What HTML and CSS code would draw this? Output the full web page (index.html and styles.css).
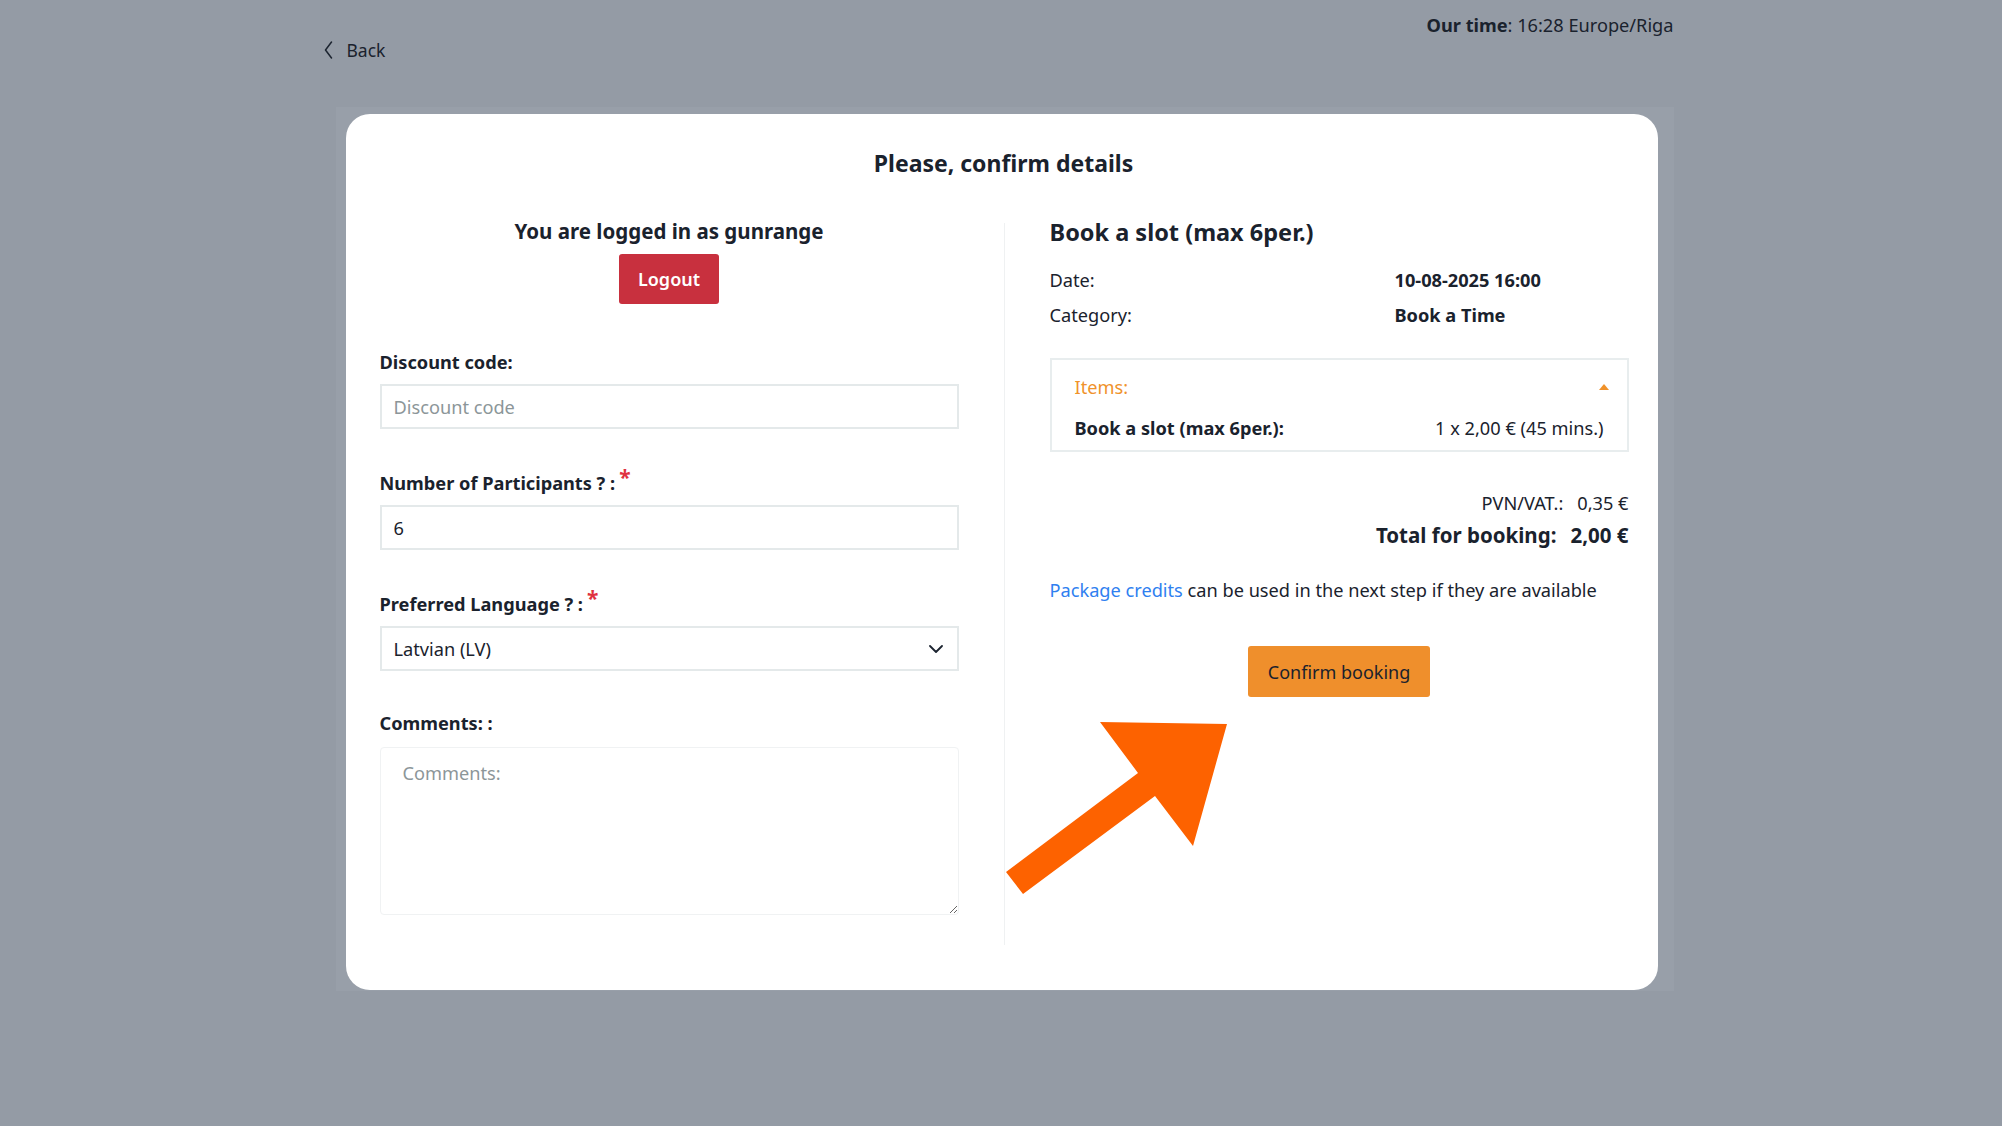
FILE: index.html
```html
<!DOCTYPE html>
<html lang="en">
<head>
  <meta charset="UTF-8">
  <title>Please, confirm details</title>
  <meta name="viewport" content="width=device-width, initial-scale=1.0">
  <link rel="stylesheet" href="styles.css">
</head>
<body>

  <div class="page">
    <div class="clock"><b>Our time</b>: 16:28 Europe/Riga</div>

    <a class="back" href="#">
      <svg width="9" height="18" viewBox="0 0 9 18"><path d="M7.5 1 L1.5 9 L7.5 17" fill="none" stroke="#1c2430" stroke-width="1.5" stroke-linecap="round" stroke-linejoin="round"/></svg>
      Back
    </a>

    <div class="panel">
      <div class="card">
        <h1 class="card-title">Please, confirm details</h1>

        <div class="columns">
          <!-- Left: user + form -->
          <div class="col-form">
            <div class="user-box">
              <div class="logged-in">You are logged in as gunrange</div>
              <button class="btn-logout">Logout</button>
            </div>

            <div class="field">
              <label>Discount code:</label>
              <input type="text" placeholder="Discount code">
            </div>

            <div class="field">
              <label>Number of Participants ? :<span class="req">*</span></label>
              <input type="text" value="6">
            </div>

            <div class="field">
              <label>Preferred Language ? :<span class="req">*</span></label>
              <div class="select-wrap">
                <select>
                  <option>Latvian (LV)</option>
                  <option>English (EN)</option>
                  <option>Russian (RU)</option>
                </select>
                <svg class="select-arrow" width="14" height="8" viewBox="0 0 14 8"><path d="M1 1 L7 7 L13 1" fill="none" stroke="#1c2430" stroke-width="1.8" stroke-linecap="round" stroke-linejoin="round"/></svg>
              </div>
            </div>

            <div class="field field-comments">
              <label>Comments: :</label>
              <textarea placeholder="Comments:"></textarea>
            </div>
          </div>

          <div class="divider"></div>

          <!-- Right: booking summary -->
          <div class="col-summary">
            <h2 class="slot-title">Book a slot (max 6per.)</h2>

            <div class="details">
              <span>Date:</span><b>10-08-2025 16:00</b>
              <span>Category:</span><b>Book a Time</b>
            </div>

            <div class="items">
              <div class="items-head">
                <span>Items:</span>
                <span class="caret"></span>
              </div>
              <div class="item-row">
                <b>Book a slot (max 6per.):</b>
                <span>1 x 2,00 € (45 mins.)</span>
              </div>
            </div>

            <div class="vat"><span>PVN/VAT.:</span><span>0,35 €</span></div>
            <div class="total"><span>Total for booking:</span><span>2,00 €</span></div>

            <p class="credits"><a href="#">Package credits</a> can be used in the next step if they are available</p>

            <div class="confirm">
              <button class="btn-confirm">Confirm booking</button>
            </div>
          </div>
        </div>

        <!-- annotation arrow -->
        <svg class="pointer" width="232" height="185" viewBox="0 0 232 185">
          <polygon points="5,157 137,58 99,7 226,9 192,131 154,81 22,179" fill="#fd6200"/>
        </svg>
      </div>
    </div>
  </div>

</body>
</html>
```

FILE: styles.css
```css
* {
  box-sizing: border-box;
}

body {
  margin: 0;
  background-color: #949ba5;
  color: #1a222d;
  font-family: "Noto Sans", "Open Sans", sans-serif;
  font-size: 18.2px;
}

.page {
  width: 1345px;
  margin: 0 auto;
  padding-top: 12px;
}

.clock {
  text-align: right;
  line-height: 26px;
}

.back {
  display: inline-flex;
  align-items: center;
  gap: 14px;
  margin-left: -5px;
  font-size: 17.5px;
  line-height: 24px;
  color: #1a222d;
  text-decoration: none;
}

.panel {
  margin: 43px 0 0 7px;
  padding: 7px 16px 1px 10px;
  background: #989fa9;
}

.card {
  position: relative;
  background: white;
  border-radius: 24px;
  padding: 33px 30px 45px 34px;
}

.card-title {
  margin: 0;
  text-align: center;
  font-size: 23px;
  line-height: 32px;
  font-weight: 700;
}

.columns {
  display: grid;
  grid-template-columns: 579px 1px 579px;
  column-gap: 45px;
  margin-top: 37px;
}

.divider {
  background: #eff1f2;
  margin-top: 7px;
}

/* left column */
.col-form {
  padding-bottom: 30px;
}

.user-box {
  text-align: center;
  padding-bottom: 4px;
}

.logged-in {
  font-size: 20.5px;
  font-weight: 700;
  line-height: 30px;
}

.btn-logout {
  margin-top: 8px;
  height: 50px;
  padding: 0 19px;
  border: none;
  border-radius: 3px;
  background: #c8303e;
  color: white;
  font-family: inherit;
  font-size: 18px;
  font-weight: 600;
  cursor: pointer;
}

.field {
  margin-top: 41px;
}

.field label {
  display: block;
  font-weight: 700;
  line-height: 26px;
  margin-bottom: 9px;
}

.field-comments {
  margin-top: 39px;
}

.field-comments label {
  margin-bottom: 11px;
}

.req {
  color: #e0323f;
  font-size: 21px;
  margin-left: 4px;
  vertical-align: 5px;
  line-height: 0;
}

.field input,
.field select,
.field textarea {
  display: block;
  width: 100%;
  height: 45px;
  padding: 0 12px;
  border: 2px solid #e4e9ea;
  border-radius: 0;
  background: white;
  color: #1a222d;
  font-family: inherit;
  font-size: 18.2px;
  outline: none;
}

.field input::placeholder,
.field textarea::placeholder {
  color: #8c9699;
}

.select-wrap {
  position: relative;
}

.field select {
  appearance: none;
  -webkit-appearance: none;
}

.select-arrow {
  position: absolute;
  right: 16px;
  top: 19px;
  pointer-events: none;
}

.field textarea {
  height: 168px;
  padding: 12px 22px;
  border: 1px solid #f0f2f3;
  border-radius: 4px;
  line-height: 26px;
}

/* right column */
.slot-title {
  margin: 0;
  font-size: 23.5px;
  font-weight: 700;
  line-height: 32px;
}

.details {
  display: grid;
  grid-template-columns: 345px 1fr;
  row-gap: 9px;
  margin-top: 19px;
  line-height: 26px;
}

.items {
  margin-top: 30px;
  padding: 14px 23px 9px;
  border: 2px solid #e8edee;
  line-height: 26px;
}

.items-head {
  display: flex;
  justify-content: space-between;
  align-items: center;
  color: #f0922b;
  margin-bottom: 15px;
}

.caret {
  width: 0;
  height: 0;
  margin-right: -5px;
  border-left: 5px solid transparent;
  border-right: 5px solid transparent;
  border-bottom: 6px solid #f0922b;
}

.item-row {
  display: flex;
  justify-content: space-between;
}

.vat,
.total {
  display: flex;
  justify-content: flex-end;
  gap: 14px;
}

.vat {
  margin-top: 38px;
  line-height: 26px;
}

.total {
  margin-top: 3px;
  font-size: 20.5px;
  font-weight: 700;
  line-height: 32px;
}

.credits {
  margin: 26px 0 0;
  line-height: 26px;
}

.credits a {
  color: #2f7ff0;
  text-decoration: none;
}

.confirm {
  margin-top: 43px;
  text-align: center;
}

.btn-confirm {
  height: 51px;
  padding: 0 20px;
  border: none;
  border-radius: 3px;
  background: #ef8f2c;
  color: #1a222d;
  font-family: inherit;
  font-size: 18px;
  cursor: pointer;
}

.pointer {
  position: absolute;
  left: 655px;
  top: 601px;
  pointer-events: none;
}
```
